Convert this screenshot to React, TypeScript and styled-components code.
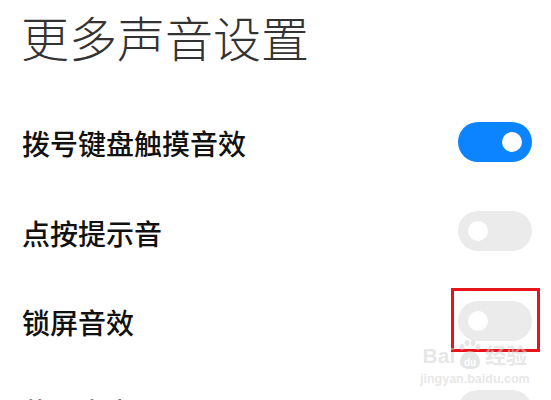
import React from 'react';
import styled, { createGlobalStyle } from 'styled-components';

const GlobalStyle = createGlobalStyle`
  html, body {
    margin: 0;
    padding: 0;
    background: #ffffff;
  }
  body {
    font-family: "Noto Sans CJK SC", "Noto Sans", sans-serif;
    overflow: hidden;
  }
`;

const Page = styled.div`
  position: relative;
  width: 551px;
  height: 400px;
  overflow: hidden;
  background: #fff;
`;

const Title = styled.h1`
  margin: 0;
  padding: 5px 0 0 21px;
  height: 97px;
  box-sizing: border-box;
  font-size: 48px;
  line-height: 62px;
  font-weight: 300;
  color: #333333;
`;

const List = styled.div`
  display: flex;
  flex-direction: column;
`;

const Row = styled.div`
  display: flex;
  align-items: center;
  justify-content: space-between;
  height: 89.5px;
  padding: 0 19px 0 22px;
  box-sizing: border-box;
`;

const Label = styled.span`
  font-size: 28px;
  font-weight: 500;
  color: #111111;
  margin-top: 3px;
`;

const Toggle = styled.div<{ $on: boolean }>`
  position: relative;
  flex-shrink: 0;
  width: 74px;
  height: 40px;
  border-radius: 20px;
  background: ${(p) => (p.$on ? '#0d84ff' : '#ebebeb')};
  display: flex;
  align-items: center;
  justify-content: ${(p) => (p.$on ? 'flex-end' : 'flex-start')};
  padding: 0 10px;
  box-sizing: border-box;
`;

const Knob = styled.span`
  width: 20px;
  height: 20px;
  border-radius: 50%;
  background: #ffffff;
`;

const Highlight = styled.span`
  position: absolute;
  left: -7px;
  top: -13px;
  width: 89px;
  height: 64px;
  box-sizing: border-box;
  border: 3px solid #e8141c;
`;

const Watermark = styled.div`
  position: absolute;
  left: 420px;
  top: 339px;
  display: flex;
  flex-direction: column;
  align-items: center;
  white-space: nowrap;
  color: rgba(210, 210, 210, 0.55);
  font-family: "Liberation Sans", "Noto Sans CJK SC", sans-serif;
  pointer-events: none;
`;

const MarkTop = styled.div`
  display: flex;
  align-items: flex-end;
  gap: 1px;
  font-size: 21px;
  font-weight: 700;
  line-height: 30px;
  height: 32px;
`;

const MarkUrl = styled.div`
  font-size: 12.5px;
  line-height: 14px;
  font-weight: 700;
  margin-top: 1px;
`;

const rows = [
  { label: '拨号键盘触摸音效', on: true },
  { label: '点按提示音', on: false },
  { label: '锁屏音效', on: false, marked: true },
  { label: '截屏声音', on: false },
];

export default function App() {
  return (
    <Page>
      <GlobalStyle />
      <Title>更多声音设置</Title>
      <List>
        {rows.map((r) => (
          <Row key={r.label}>
            <Label>{r.label}</Label>
            <Toggle $on={r.on}>
              <Knob />
              {r.marked && <Highlight />}
            </Toggle>
          </Row>
        ))}
      </List>
      <Watermark>
        <MarkTop>
          <span>Bai</span>
          <svg width="28" height="32" viewBox="0 0 28 32">
            <g fill="rgba(210,210,210,0.55)">
              <ellipse cx="6" cy="8" rx="2.5" ry="3" />
              <ellipse cx="11" cy="4" rx="2.5" ry="3" />
              <ellipse cx="17" cy="4" rx="2.5" ry="3" />
              <ellipse cx="22" cy="8" rx="2.5" ry="3" />
              <path d="M14 12c-6 0-10 6-10 11s4 7 10 7 10-2 10-7-4-11-10-11z" />
            </g>
            <text x="14" y="27" fontSize="10" fill="#fff" textAnchor="middle" fontFamily="Liberation Sans" fontWeight="700">du</text>
          </svg>
          <span>经验</span>
        </MarkTop>
        <MarkUrl>jingyan.baidu.com</MarkUrl>
      </Watermark>
    </Page>
  );
}
